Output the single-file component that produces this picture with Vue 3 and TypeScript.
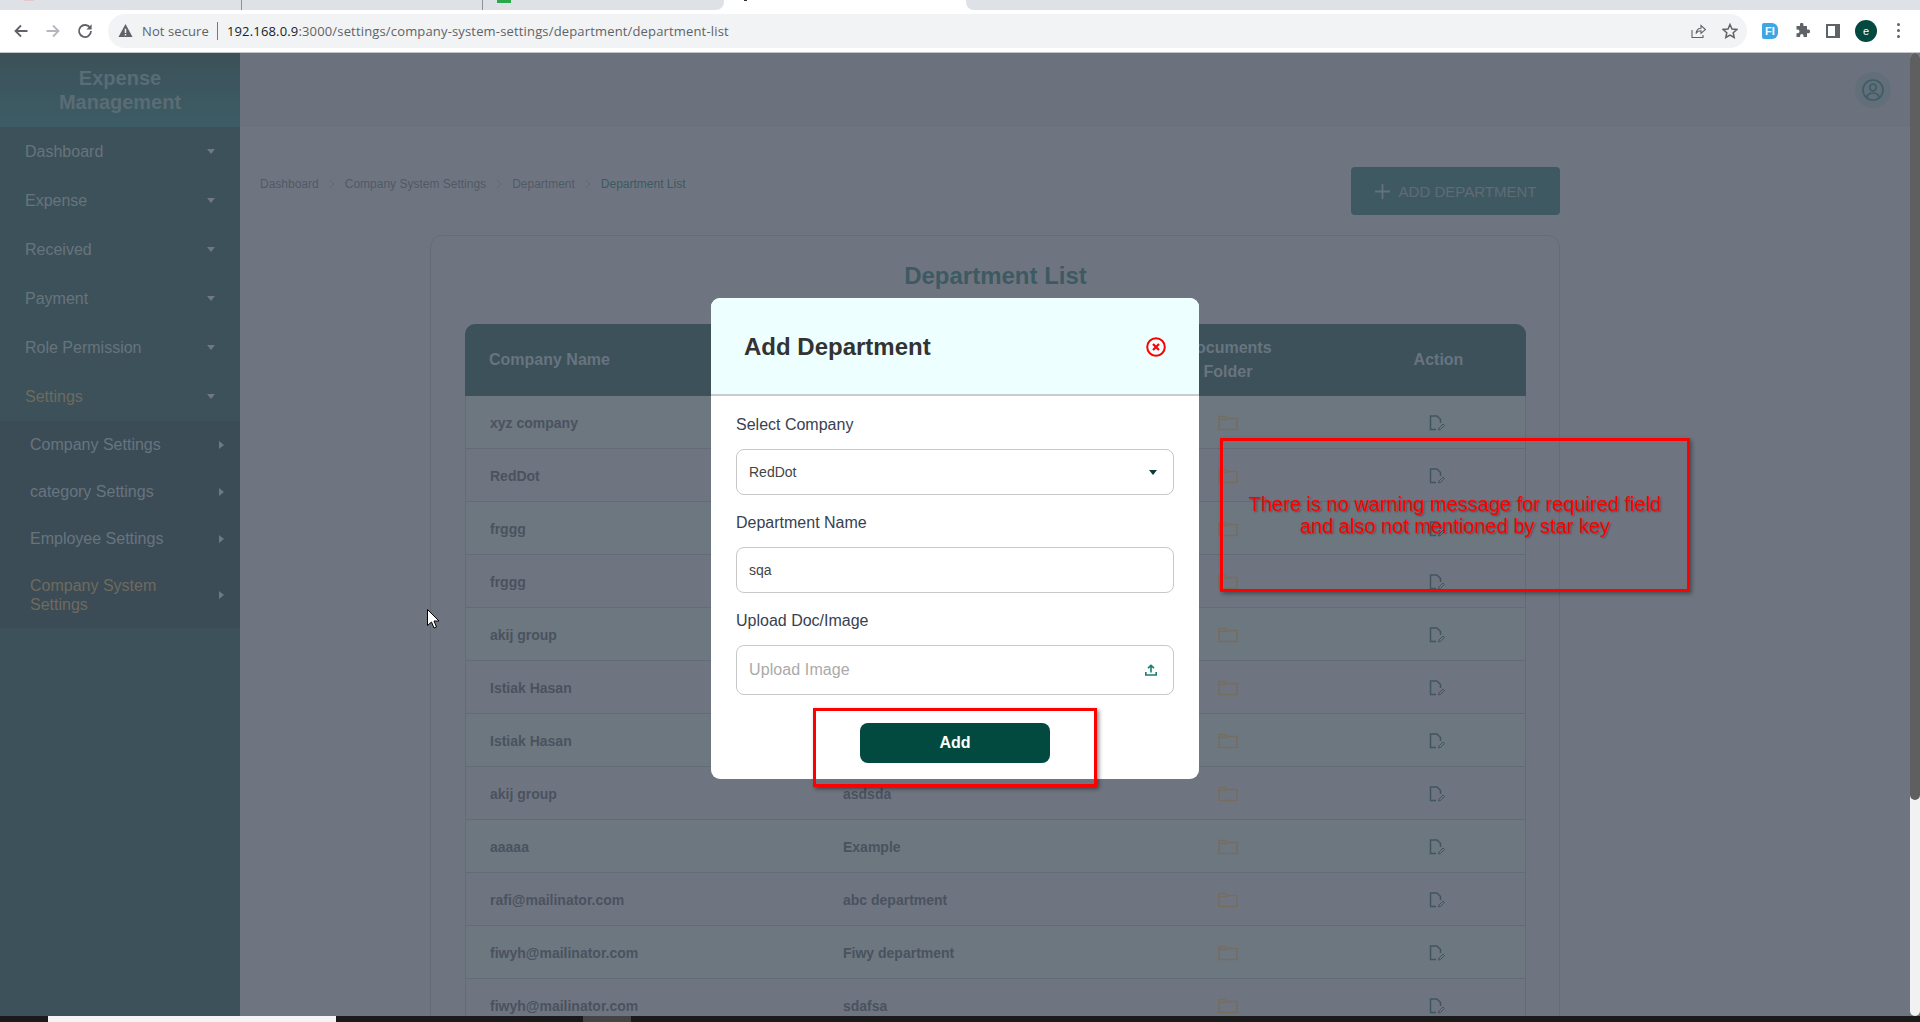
<script setup lang="ts">
interface MenuItem { label: string; active?: boolean }
const mainMenu: MenuItem[] = [
  { label: 'Dashboard' }, { label: 'Expense' }, { label: 'Received' },
  { label: 'Payment' }, { label: 'Role Permission' }, { label: 'Settings', active: true },
]
const subMenu: MenuItem[] = [
  { label: 'Company Settings' }, { label: 'category Settings' },
  { label: 'Employee Settings' }, { label: 'Company System Settings', active: true },
]
const crumbs = ['Dashboard', 'Company System Settings', 'Department', 'Department List']
const rows: [string, string][] = [
  ['xyz company', ''], ['RedDot', ''], ['frggg', ''], ['frggg', ''], ['akij group', ''],
  ['Istiak Hasan', ''], ['Istiak Hasan', ''], ['akij group', 'asdsda'], ['aaaaa', 'Example'],
  ['rafi@mailinator.com', 'abc department'], ['fiwyh@mailinator.com', 'Fiwy department'],
  ['fiwyh@mailinator.com', 'sdafsa'],
]
</script>

<template>
  <div class="screen">
    <div class="tabstrip">
      <div class="tabs-left">
        <div class="tab tab-sep"><i class="fav fav-pink"></i></div>
        <div class="tab tab-sep"></div>
        <div class="tab"><i class="fav fav-green"></i></div>
      </div>
      <div class="tab-active"><i class="fav fav-dark"></i></div>
      <div class="tabs-right"></div>
    </div>

    <div class="toolbar">
      <svg class="nav" viewBox="0 0 16 16"><path d="M14.5 8H2.500M8 2.500 2.500 8 8 13.500" fill="none" stroke="#5f6368" stroke-width="1.800"/></svg>
      <svg class="nav" viewBox="0 0 16 16"><path d="M1.500 8h12M8 2.500 13.500 8 8 13.500" fill="none" stroke="#b4b7bb" stroke-width="1.800"/></svg>
      <svg class="nav" viewBox="0 0 16 16"><path d="M13.200 5A6 6 0 1 0 14 8" fill="none" stroke="#5f6368" stroke-width="1.800"/><path d="M14.600 1.200v5.200H9.400z" fill="#5f6368"/></svg>
      <div class="omnibox">
        <svg class="warn" viewBox="0 0 16 16"><path d="M8 1 15.500 15H.5z" fill="#5f6368"/><path d="M7.200 6h1.600v4.600H7.200zM7.200 11.600h1.600v1.600H7.200z" fill="#f1f3f4"/></svg>
        <span class="not-secure">Not secure</span>
        <span class="divider"></span>
        <span class="url"><b>192.168.0.9</b>:3000/settings/company-system-settings/department/department-list</span>
        <svg class="omni-icon share" viewBox="0 0 16 16"><path d="M2 7v7.500h11V12M6 10.500C6.500 7 9 5.300 11 5.300V2.500L15.500 6.500 11 10.300V7.800c-2 0-3.800.6-5 2.700z" fill="none" stroke="#5f6368" stroke-width="1.100"/></svg>
        <svg class="omni-icon star" viewBox="0 0 16 16"><path d="M8 1.500 10 6l4.800.5-3.600 3.200 1 4.800L8 12l-4.200 2.500 1-4.800L1.200 6.500 6 6z" fill="none" stroke="#5f6368" stroke-width="1.500"/></svg>
      </div>
      <div class="ext"><span class="ext-fi">FI</span></div>
      <svg class="puzzle" viewBox="0 0 16 16"><path d="M6 1.500a1.700 1.700 0 0 1 3.400 0V3H13v3.600h1.300a1.800 1.800 0 0 1 0 3.600H13V14H9.500v-1.300a1.700 1.700 0 0 0-3.400 0V14H2.500v-3.800h1.200a1.800 1.800 0 0 0 0-3.600H2.500V3H6z" fill="#5f6368"/></svg>
      <span class="sidepanel"></span>
      <span class="profile">e</span>
      <span class="dots"><i></i><i></i><i></i></span>
    </div>

    <div class="main">
      <aside class="sidebar">
        <div class="logo">Expense<br />Management</div>
        <div v-for="m in mainMenu" :key="m.label" class="menu-item" :class="{ active: m.active }">
          <span>{{ m.label }}</span><i class="caret-down"></i>
        </div>
        <div class="submenu">
          <div v-for="s in subMenu" :key="s.label" class="sub-item" :class="{ active: s.active }">
            <span class="sub-label">{{ s.label }}</span><i class="caret-right"></i>
          </div>
        </div>
      </aside>

      <div class="content">
        <header class="topbar">
          <span class="avatar">
            <svg viewBox="0 0 24 24" width="24" height="24" fill="none" stroke="#3f5d67" stroke-width="1.700"><circle cx="12" cy="12" r="10"/><circle cx="12" cy="9.500" r="3.300"/><path d="M5.500 19c1.500-3 3.800-4 6.500-4s5 1 6.500 4"/></svg>
          </span>
        </header>

        <div class="body">
          <div class="body-head">
            <nav class="breadcrumb">
              <template v-for="(c, i) in crumbs" :key="c">
                <span :class="{ current: i === crumbs.length - 1 }">{{ c }}</span>
                <svg v-if="i < crumbs.length - 1" class="crumb-sep" viewBox="0 0 6 10"><path d="M1 1l4 4-4 4" fill="none" stroke="#5f6874" stroke-width="1"/></svg>
              </template>
            </nav>
            <div class="add-btn">
              <svg class="plus" width="15" height="15" viewBox="0 0 15 15"><path d="M7.500 0v15M0 7.500h15" stroke="#64717b" stroke-width="1.800" fill="none"/></svg>
              ADD DEPARTMENT
            </div>
          </div>

          <section class="card">
            <h2 class="title">Department List</h2>
            <div class="table">
              <div class="thead">
                <div class="th th-left">Company Name</div>
                <div class="th"></div>
                <div class="th th-center">Documents<br />Folder</div>
                <div class="th th-center th-action">Action</div>
              </div>
              <div v-for="(r, i) in rows" :key="i" class="tr" :class="{ odd: i % 2 === 0 }">
                <div class="td">{{ r[0] }}</div>
                <div class="td">{{ r[1] }}</div>
                <div class="td td-center">
                  <svg width="20" height="16" viewBox="0 0 20 16" fill="none" stroke="#756e5f" stroke-width="1.500"><path d="M1 14.500V1.500h6l2 2h10v11z"/><path d="M1 4.500h8"/></svg>
                </div>
                <div class="td td-center">
                  <svg width="16" height="16" viewBox="0 0 16 16" fill="none" stroke="#3f5560"><path d="M7 14.500H1.500V1h6.500l3.500 3.500V8" stroke-width="1.500"/><path d="M9.500 15l.5-2 4-4 1.500 1.500-4 4z" stroke-width="1"/></svg>
                </div>
              </div>
            </div>
          </section>
        </div>
      </div>

      <div class="scrollbar"><div class="thumb"></div></div>

      <div class="modal">
        <div class="modal-head">
          <h3>Add Department</h3>
          <svg class="close" viewBox="0 0 20 20" fill="none" stroke="#f00"><circle cx="10" cy="10" r="8.800" stroke-width="2"/><path d="M7 7l6 6M13 7l-6 6" stroke-width="2.200"/></svg>
        </div>
        <div class="modal-body">
          <label class="lbl first">Select Company</label>
          <div class="field"><span>RedDot</span><i class="select-caret"></i></div>
          <label class="lbl">Department Name</label>
          <div class="field"><span>sqa</span></div>
          <label class="lbl">Upload Doc/Image</label>
          <div class="field upload">
            <span class="placeholder">Upload Image</span>
            <svg width="12" height="12" viewBox="0 0 12 12" fill="none" stroke="#1b7f6e" stroke-width="1.600"><path d="M6 8.500V1.500M3 4.200 6 1.300l3 2.900M.8 8v3h10.400V8"/></svg>
          </div>
          <div class="submit-row"><div class="submit">Add</div></div>
        </div>
      </div>

      <div class="mark mark-add"></div>
      <div class="mark mark-note">There is no warning message for required field<br />and also not mentioned by star key</div>

      <svg class="cursor" width="12" height="20" viewBox="0 0 12 20"><path d="M.5.500v16l4-3.500 2.500 6 2.500-1-2.500-6h5z" fill="#fff" stroke="#000" stroke-width="1"/></svg>
    </div>

    <div class="taskbar">
      <span class="task-white"></span>
      <span class="task-grey"></span>
    </div>
  </div>
</template>

<style>
html, body { margin: 0; overflow: hidden; }
</style>

<style scoped>
* { box-sizing: border-box; }
.screen {
  width: 1920px; height: 1022px; display: flex; flex-direction: column; overflow: hidden;
  font-family: "Liberation Sans", Arial, sans-serif; background: #fff;
}
.tabstrip { height: 10px; display: flex; flex: none; background: #fff; }
.tabs-left { width: 724px; display: flex; background: #dee1e6; border-bottom-right-radius: 8px; }
.tab { flex: 1; position: relative; overflow: hidden; }
.tab-sep { border-right: 1px solid #8e9197; }
.tab-active { width: 242px; position: relative; overflow: hidden; }
.tabs-right { flex: 1; background: #dee1e6; border-bottom-left-radius: 8px; }
.fav { position: absolute; display: block; }
.fav-pink { left: 24px; top: 0; width: 10px; height: 1px; background: #e3c9cc; }
.fav-green { left: 14px; top: 0; width: 14px; height: 3px; background: #2aa84a; }
.fav-dark { left: 20px; top: 0; width: 3px; height: 1px; background: #333; }

.toolbar { height: 43px; flex: none; display: flex; align-items: center; padding: 0 0 1px 13px; background: #fff; border-bottom: 1px solid #c4c6c9; }
.nav { width: 16px; height: 16px; margin-right: 16px; flex: none; }
.omnibox { width: 1639px; margin-left: -1px; height: 34px; border-radius: 17px; background: #f1f3f4; display: flex; align-items: center; padding-left: 10px; font-family: "Open Sans", "Liberation Sans", sans-serif; font-size: 13px; color: #5f6368; }
.warn { width: 15px; height: 15px; flex: none; margin-right: 9px; }
.not-secure { letter-spacing: .1px; }
.divider { width: 1px; height: 18px; background: #75787c; margin: 0 9px 0 8px; }
.url { letter-spacing: .16px; flex: 1; white-space: nowrap; }
.url b { font-weight: 400; color: #202124; }
.omni-icon { width: 16px; height: 16px; flex: none; }
.share { margin-right: 16px; }
.star { margin-right: 9px; }
.ext { width: 16px; height: 16px; margin-left: 15px; flex: none; background: #3fa6e4; border-radius: 2px 6px 6px 2px; display: flex; align-items: center; justify-content: center; }
.ext-fi { color: #fff; font: 700 11px "Liberation Sans", sans-serif; }
.puzzle { width: 16px; height: 16px; margin-left: 16px; flex: none; }
.sidepanel { width: 14px; height: 14px; margin-left: 16px; flex: none; border: 2px solid #5f6368; border-right-width: 5px; }
.profile { width: 22px; height: 22px; margin-left: 15px; border-radius: 50%; background: #024a3f; color: #fff; font-size: 11px; display: flex; align-items: center; justify-content: center; flex: none; }
.dots { display: flex; flex-direction: column; gap: 3px; margin-left: 20px; }
.dots i { width: 3px; height: 3px; border-radius: 50%; background: #5f6368; display: block; }

.main { flex: 1; display: flex; position: relative; min-height: 0; overflow: hidden; background: #6f7580; }
.sidebar { width: 240px; flex: none; background: #3c515a; }
.logo { height: 74px; padding-top: 13px; text-align: center; font-size: 20px; line-height: 24px; font-weight: 700; color: #5a6c75; background: linear-gradient(180deg, #3c515a, #3d5c65); }
.menu-item { height: 49px; padding: 0 25px; display: flex; align-items: center; justify-content: space-between; font-size: 16px; color: #68747d; }
.menu-item.active { color: #6f6a5e; }
.caret-down { width: 0; height: 0; border-left: 4px solid transparent; border-right: 4px solid transparent; border-top: 5px solid #6f7883; }
.submenu { background: #3b4c57; }
.sub-item { min-height: 47px; padding: 0 16px 0 30px; display: flex; align-items: center; justify-content: space-between; font-size: 16px; line-height: 19px; color: #68747f; }
.sub-item.active { min-height: 66px; color: #6f6a5e; }
.sub-label { max-width: 160px; }
.caret-right { width: 0; height: 0; border-top: 4px solid transparent; border-bottom: 4px solid transparent; border-left: 5px solid #6f7883; }

.content { flex: 1; min-width: 0; display: flex; flex-direction: column; }
.topbar { height: 74px; flex: none; background: #6b717d; display: flex; align-items: center; justify-content: flex-end; padding-right: 19px; }
.avatar { width: 36px; height: 36px; border-radius: 50%; background: #626f7a; display: flex; align-items: center; justify-content: center; margin-top: -1px; }
.body { flex: 1; padding: 40px 350px 0 20px; min-height: 0; }
.body-head { display: flex; justify-content: space-between; align-items: flex-start; }
.breadcrumb { display: flex; align-items: center; font-size: 12px; line-height: 16px; color: #505a66; margin-top: 9px; }
.breadcrumb .current { color: #3a5a60; }
.crumb-sep { width: 6px; height: 10px; margin: 0 10px; }
.add-btn { width: 209px; height: 48px; border-radius: 4px; background: #3f5962; color: #5f6c76; font-size: 15px; display: flex; align-items: center; justify-content: center; }
.plus { margin-right: 9px; }
.card { margin: 20px 0 0 170px; border: 1px solid #656c78; border-radius: 12px; padding: 24px 33px 0 34px; height: 900px; }
.title { margin: 0 0 32px; height: 32px; line-height: 32px; font-size: 24px; font-weight: 700; text-align: center; color: #3d5a63; }
.thead { display: grid; grid-template-columns: 354px 289px 240px 178px; height: 72px; background: #3c515a; border-radius: 10px 10px 0 0; align-items: center; color: #68747f; font-size: 16px; font-weight: 700; line-height: 24px; }
.th-left { padding-left: 24px; }
.th-center { text-align: center; }
.th-action { padding-left: 3px; }
.tr { display: grid; grid-template-columns: 353px 289px 240px 177px; height: 53px; padding-top: 2px; border: 1px solid #626b76; border-width: 0 1px 1px; align-items: center; color: #4a525f; font-size: 14px; font-weight: 700; background: #6f7580; }
.tr.odd { background: #6d7780; }
.td { padding-left: 24px; white-space: nowrap; }
.td-center { padding-left: 0; display: flex; justify-content: center; }

.scrollbar { width: 10px; flex: none; background: #f1f1f1; border-radius: 5px; }
.thumb { height: 747px; background: #5f5f5f; border-radius: 5px; }

.modal { position: absolute; left: 711px; top: 245px; width: 488px; height: 481px; background: #fff; border-radius: 9px; overflow: hidden; }
.modal-head { height: 98px; background: #eeffff; border-bottom: 2px solid #c8cccc; display: flex; align-items: center; justify-content: space-between; padding: 2px 33px 0; }
.modal-head h3 { margin: 0; font-size: 24px; font-weight: 700; color: #333; }
.close { width: 20px; height: 20px; }
.modal-body { padding: 0 25px; display: flex; flex-direction: column; }
.lbl { height: 24px; line-height: 24px; margin: 16px 0 12px; font-size: 16px; color: #374151; }
.lbl.first { margin-top: 17px; }
.field { height: 46px; flex: none; border: 1px solid #c8c8c8; border-radius: 8px; display: flex; align-items: center; justify-content: space-between; padding: 0 16px 0 12px; font-size: 14px; color: #444; }
.field.upload { height: 50px; }
.placeholder { font-size: 16px; color: #aaa; letter-spacing: .1px; }
.select-caret { width: 0; height: 0; border-left: 4px solid transparent; border-right: 4px solid transparent; border-top: 5px solid #0c3a35; }
.submit-row { display: flex; justify-content: center; margin-top: 28px; }
.submit { width: 190px; height: 40px; border-radius: 8px; background: #024a3f; color: #fff; font-size: 16px; font-weight: 700; display: flex; align-items: center; justify-content: center; }

.mark { position: absolute; border: 3px solid #f00; box-shadow: 2px 2px 4px rgba(0, 0, 0, .45); }
.mark-add { left: 813px; top: 655px; width: 284px; height: 79px; }
.mark-note { left: 1220px; top: 385px; width: 470px; height: 154px; display: flex; align-items: center; justify-content: center; text-align: center; color: #f00; font-size: 20px; line-height: 22px; text-shadow: 1px 1px 2px rgba(0, 0, 0, .4); box-shadow: 2px 2px 4px rgba(0, 0, 0, .35); }
.cursor { position: absolute; left: 427px; top: 556px; }

.taskbar { height: 6px; flex: none; background: #1a1a1a; display: flex; padding-left: 48px; }
.task-white { width: 288px; background: #f4f4f4; }
.task-grey { width: 48px; margin-left: 247px; background: #444; }
</style>
